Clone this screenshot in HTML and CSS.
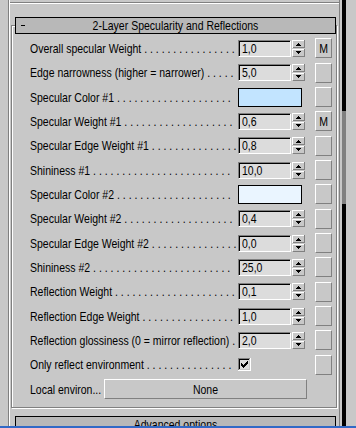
FILE: index.html
```html
<!DOCTYPE html>
<html>
<head>
<meta charset="utf-8">
<link rel="stylesheet" href="styles.css">
</head>
<body>
<div class="screen">
  <div class="main">
    <div class="panel">
      <div class="prevline"></div>
      <div class="rhead"><span class="minus"></span><span class="title t">2-Layer Specularity and Reflections</span><span></span></div>
      <div class="group">
        <div class="row"><div class="label"><span>Overall specular Weight</span><span class="dots"> . . . . . . . . . . . . . . . .</span></div><div class="ctl"><div class="field"><span class="t">1,0</span></div><svg class="spin" width="13" height="17" viewBox="0 0 13 17" shape-rendering="crispEdges"><rect width="13" height="17" fill="#c8c8c8"/><path d="M0.5 7.5V0.5H12" stroke="#fff" fill="none"/><path d="M0.5 7.5H12.5V0" stroke="#808080" fill="none"/><path d="M0.5 16V9.5H12" stroke="#fff" fill="none"/><path d="M0.5 16.5H12.5V9" stroke="#808080" fill="none"/><path d="M6 3h1v1h-1zM5 4h3v1h-3zM4 5h5v1h-5zM4 11h5v1h-5zM5 12h3v1h-3zM6 13h1v1h-1z" fill="#000"/></svg></div><div class="btn"><span class="t">M</span></div></div>
        <div class="row"><div class="label"><span>Edge narrowness (higher = narrower)</span><span class="dots"> . . . . .</span></div><div class="ctl"><div class="field"><span class="t">5,0</span></div><svg class="spin" width="13" height="17" viewBox="0 0 13 17" shape-rendering="crispEdges"><rect width="13" height="17" fill="#c8c8c8"/><path d="M0.5 7.5V0.5H12" stroke="#fff" fill="none"/><path d="M0.5 7.5H12.5V0" stroke="#808080" fill="none"/><path d="M0.5 16V9.5H12" stroke="#fff" fill="none"/><path d="M0.5 16.5H12.5V9" stroke="#808080" fill="none"/><path d="M6 3h1v1h-1zM5 4h3v1h-3zM4 5h5v1h-5zM4 11h5v1h-5zM5 12h3v1h-3zM6 13h1v1h-1z" fill="#000"/></svg></div><div class="btn"></div></div>
        <div class="row"><div class="label"><span>Specular Color #1</span><span class="dots"> . . . . . . . . . . . . . . . . . . . .</span></div><div class="ctl"><div class="swatch sw1"></div></div><div class="btn"></div></div>
        <div class="row"><div class="label"><span>Specular Weight #1</span><span class="dots"> . . . . . . . . . . . . . . . . . . .</span></div><div class="ctl"><div class="field"><span class="t">0,6</span></div><svg class="spin" width="13" height="17" viewBox="0 0 13 17" shape-rendering="crispEdges"><rect width="13" height="17" fill="#c8c8c8"/><path d="M0.5 7.5V0.5H12" stroke="#fff" fill="none"/><path d="M0.5 7.5H12.5V0" stroke="#808080" fill="none"/><path d="M0.5 16V9.5H12" stroke="#fff" fill="none"/><path d="M0.5 16.5H12.5V9" stroke="#808080" fill="none"/><path d="M6 3h1v1h-1zM5 4h3v1h-3zM4 5h5v1h-5zM4 11h5v1h-5zM5 12h3v1h-3zM6 13h1v1h-1z" fill="#000"/></svg></div><div class="btn"><span class="t">M</span></div></div>
        <div class="row"><div class="label"><span>Specular Edge Weight #1</span><span class="dots"> . . . . . . . . . . . . . . .</span></div><div class="ctl"><div class="field"><span class="t">0,8</span></div><svg class="spin" width="13" height="17" viewBox="0 0 13 17" shape-rendering="crispEdges"><rect width="13" height="17" fill="#c8c8c8"/><path d="M0.5 7.5V0.5H12" stroke="#fff" fill="none"/><path d="M0.5 7.5H12.5V0" stroke="#808080" fill="none"/><path d="M0.5 16V9.5H12" stroke="#fff" fill="none"/><path d="M0.5 16.5H12.5V9" stroke="#808080" fill="none"/><path d="M6 3h1v1h-1zM5 4h3v1h-3zM4 5h5v1h-5zM4 11h5v1h-5zM5 12h3v1h-3zM6 13h1v1h-1z" fill="#000"/></svg></div><div class="btn"></div></div>
        <div class="row"><div class="label"><span>Shininess #1</span><span class="dots"> . . . . . . . . . . . . . . . . . . . . . . . .</span></div><div class="ctl"><div class="field"><span class="t">10,0</span></div><svg class="spin" width="13" height="17" viewBox="0 0 13 17" shape-rendering="crispEdges"><rect width="13" height="17" fill="#c8c8c8"/><path d="M0.5 7.5V0.5H12" stroke="#fff" fill="none"/><path d="M0.5 7.5H12.5V0" stroke="#808080" fill="none"/><path d="M0.5 16V9.5H12" stroke="#fff" fill="none"/><path d="M0.5 16.5H12.5V9" stroke="#808080" fill="none"/><path d="M6 3h1v1h-1zM5 4h3v1h-3zM4 5h5v1h-5zM4 11h5v1h-5zM5 12h3v1h-3zM6 13h1v1h-1z" fill="#000"/></svg></div><div class="btn"></div></div>
        <div class="row"><div class="label"><span>Specular Color #2</span><span class="dots"> . . . . . . . . . . . . . . . . . . . .</span></div><div class="ctl"><div class="swatch sw2"></div></div><div class="btn"></div></div>
        <div class="row"><div class="label"><span>Specular Weight #2</span><span class="dots"> . . . . . . . . . . . . . . . . . . .</span></div><div class="ctl"><div class="field"><span class="t">0,4</span></div><svg class="spin" width="13" height="17" viewBox="0 0 13 17" shape-rendering="crispEdges"><rect width="13" height="17" fill="#c8c8c8"/><path d="M0.5 7.5V0.5H12" stroke="#fff" fill="none"/><path d="M0.5 7.5H12.5V0" stroke="#808080" fill="none"/><path d="M0.5 16V9.5H12" stroke="#fff" fill="none"/><path d="M0.5 16.5H12.5V9" stroke="#808080" fill="none"/><path d="M6 3h1v1h-1zM5 4h3v1h-3zM4 5h5v1h-5zM4 11h5v1h-5zM5 12h3v1h-3zM6 13h1v1h-1z" fill="#000"/></svg></div><div class="btn"></div></div>
        <div class="row"><div class="label"><span>Specular Edge Weight #2</span><span class="dots"> . . . . . . . . . . . . . . .</span></div><div class="ctl"><div class="field"><span class="t">0,0</span></div><svg class="spin" width="13" height="17" viewBox="0 0 13 17" shape-rendering="crispEdges"><rect width="13" height="17" fill="#c8c8c8"/><path d="M0.5 7.5V0.5H12" stroke="#fff" fill="none"/><path d="M0.5 7.5H12.5V0" stroke="#808080" fill="none"/><path d="M0.5 16V9.5H12" stroke="#fff" fill="none"/><path d="M0.5 16.5H12.5V9" stroke="#808080" fill="none"/><path d="M6 3h1v1h-1zM5 4h3v1h-3zM4 5h5v1h-5zM4 11h5v1h-5zM5 12h3v1h-3zM6 13h1v1h-1z" fill="#000"/></svg></div><div class="btn"></div></div>
        <div class="row"><div class="label"><span>Shininess #2</span><span class="dots"> . . . . . . . . . . . . . . . . . . . . . . . .</span></div><div class="ctl"><div class="field"><span class="t">25,0</span></div><svg class="spin" width="13" height="17" viewBox="0 0 13 17" shape-rendering="crispEdges"><rect width="13" height="17" fill="#c8c8c8"/><path d="M0.5 7.5V0.5H12" stroke="#fff" fill="none"/><path d="M0.5 7.5H12.5V0" stroke="#808080" fill="none"/><path d="M0.5 16V9.5H12" stroke="#fff" fill="none"/><path d="M0.5 16.5H12.5V9" stroke="#808080" fill="none"/><path d="M6 3h1v1h-1zM5 4h3v1h-3zM4 5h5v1h-5zM4 11h5v1h-5zM5 12h3v1h-3zM6 13h1v1h-1z" fill="#000"/></svg></div><div class="btn"></div></div>
        <div class="row"><div class="label"><span>Reflection Weight</span><span class="dots"> . . . . . . . . . . . . . . . . . . . . .</span></div><div class="ctl"><div class="field"><span class="t">0,1</span></div><svg class="spin" width="13" height="17" viewBox="0 0 13 17" shape-rendering="crispEdges"><rect width="13" height="17" fill="#c8c8c8"/><path d="M0.5 7.5V0.5H12" stroke="#fff" fill="none"/><path d="M0.5 7.5H12.5V0" stroke="#808080" fill="none"/><path d="M0.5 16V9.5H12" stroke="#fff" fill="none"/><path d="M0.5 16.5H12.5V9" stroke="#808080" fill="none"/><path d="M6 3h1v1h-1zM5 4h3v1h-3zM4 5h5v1h-5zM4 11h5v1h-5zM5 12h3v1h-3zM6 13h1v1h-1z" fill="#000"/></svg></div><div class="btn"></div></div>
        <div class="row"><div class="label"><span>Reflection Edge Weight</span><span class="dots"> . . . . . . . . . . . . . . . .</span></div><div class="ctl"><div class="field"><span class="t">1,0</span></div><svg class="spin" width="13" height="17" viewBox="0 0 13 17" shape-rendering="crispEdges"><rect width="13" height="17" fill="#c8c8c8"/><path d="M0.5 7.5V0.5H12" stroke="#fff" fill="none"/><path d="M0.5 7.5H12.5V0" stroke="#808080" fill="none"/><path d="M0.5 16V9.5H12" stroke="#fff" fill="none"/><path d="M0.5 16.5H12.5V9" stroke="#808080" fill="none"/><path d="M6 3h1v1h-1zM5 4h3v1h-3zM4 5h5v1h-5zM4 11h5v1h-5zM5 12h3v1h-3zM6 13h1v1h-1z" fill="#000"/></svg></div><div class="btn"></div></div>
        <div class="row"><div class="label"><span>Reflection glossiness (0 = mirror reflection)</span><span class="dots"> .</span></div><div class="ctl"><div class="field"><span class="t">2,0</span></div><svg class="spin" width="13" height="17" viewBox="0 0 13 17" shape-rendering="crispEdges"><rect width="13" height="17" fill="#c8c8c8"/><path d="M0.5 7.5V0.5H12" stroke="#fff" fill="none"/><path d="M0.5 7.5H12.5V0" stroke="#808080" fill="none"/><path d="M0.5 16V9.5H12" stroke="#fff" fill="none"/><path d="M0.5 16.5H12.5V9" stroke="#808080" fill="none"/><path d="M6 3h1v1h-1zM5 4h3v1h-3zM4 5h5v1h-5zM4 11h5v1h-5zM5 12h3v1h-3zM6 13h1v1h-1z" fill="#000"/></svg></div><div class="btn"></div></div>
        <div class="row"><div class="label"><span>Only reflect environment</span><span class="dots"> . . . . . . . . . . . . . . .</span></div><div class="ctl"><svg class="check" width="13" height="13" viewBox="0 0 13 13" shape-rendering="crispEdges"><rect width="13" height="13" fill="#dcdcdc"/><path d="M0.5 12V0.5H12" stroke="#808080" fill="none"/><path d="M1.5 11V1.5H11" stroke="#000" fill="none"/><path d="M0 12.5H12.5V0" stroke="#fff" fill="none"/><path d="M1 11.5H11.5V1" stroke="#c8c8c8" fill="none"/><path d="M9 3h1v1h-1zM8 4h2v1h-2zM3 5h1v1h-1zM7 5h3v1h-3zM3 6h2v1h-2zM6 6h3v1h-3zM3 7h5v1h-5zM4 8h3v1h-3zM5 9h1v1h-1z" fill="#000"/></svg></div><div class="btn"></div></div>
        <div class="row"><div class="label short"><span>Local environ...</span></div><div class="none"><span class="t">None</span></div></div>
      </div>
      <div class="rhead adv"><span></span><span class="title t">Advanced options</span><span></span></div>
    </div>
    <div class="sbar"><div class="track"><div class="thumb"></div></div></div>
  </div>
  <div class="blue"></div>
</div>
</body>
</html>
```

FILE: styles.css
```css
body {
  margin: 0;
  background: #c8c8c8;
  font-family: "Liberation Sans", Arial, sans-serif;
  font-size: 10.5px;
  color: #000;
}

.screen {
  width: 356px;
  height: 428px;
  display: flex;
  flex-direction: column;
  overflow: hidden;
}

.main {
  height: 426px;
  flex: none;
  display: flex;
  overflow: hidden;
}

.t {
  display: inline-block;
  transform: scaleY(1.3);
}

.panel {
  margin-left: 8px;
  width: 332px;
  flex: none;
  box-sizing: border-box;
  border-left: 1px solid #808080;
  border-right: 1px solid #808080;
  box-shadow: inset 1px 0 0 #fff;
  padding-top: 2px;
}

.prevline {
  height: 2px;
  margin-left: 1px;
  box-sizing: border-box;
  border-top: 1px solid #808080;
  border-bottom: 1px solid #fff;
}

.rhead {
  margin: 13px 0 0 6px;
  width: 321px;
  height: 17px;
  box-sizing: border-box;
  border: 1px solid #000;
  background: #b8b8b8;
  display: grid;
  grid-template-columns: 1fr auto 1fr;
  line-height: 15px;
  position: relative;
  z-index: 1;
  white-space: nowrap;
  overflow: hidden;
}

.minus {
  justify-self: start;
  width: 4px;
  height: 1px;
  background: #000;
  margin: 7px 0 0 5px;
}

.adv {
  margin-top: 8px;
}

.group {
  margin: -9px 0 0 2px;
  width: 326px;
  height: 383px;
  box-sizing: border-box;
  border: 1px solid #808080;
  box-shadow: 1px 1px 0 #fff, inset 1px 1px 0 #fff;
  padding: 10.333px 0 0 18px;
}

.row {
  height: 24.333px;
  display: flex;
  align-items: center;
}

.label {
  width: 208px;
  flex: none;
  display: flex;
  overflow: hidden;
  white-space: nowrap;
  line-height: 15px;
  transform: scaleY(1.3);
}

.label.short {
  width: 74px;
  overflow: visible;
}

.dots {
  white-space: pre;
}

.ctl {
  width: 67px;
  flex: none;
  display: flex;
  align-items: center;
}

.field {
  width: 53px;
  height: 17px;
  flex: none;
  box-sizing: border-box;
  border: 1px solid;
  border-color: #808080 #fff #fff #808080;
  box-shadow: inset 1px 1px 0 #000;
  background: #dcdcdc;
  padding-left: 3px;
  line-height: 15px;
}

.spin {
  display: block;
  margin-left: 1px;
  flex: none;
}

.check {
  display: block;
  flex: none;
}

.btn {
  width: 17px;
  height: 20px;
  flex: none;
  margin-left: 10px;
  box-sizing: border-box;
  border: 1px solid;
  border-color: #fff #808080 #808080 #fff;
  text-align: center;
  line-height: 18px;
}

.swatch {
  width: 64px;
  height: 19px;
  box-sizing: border-box;
  border: 1px solid #000;
}

.sw1 { background: #c2e4ff; }
.sw2 { background: #eaf5ff; }

.none {
  width: 203px;
  height: 20px;
  flex: none;
  box-sizing: border-box;
  border: 1px solid;
  border-color: #fff #808080 #808080 #fff;
  text-align: center;
  line-height: 18px;
}

.sbar {
  width: 16px;
  flex: none;
  padding-left: 2px;
  box-sizing: border-box;
}

.track {
  width: 4px;
  height: 426px;
  background: #000;
  overflow: hidden;
}

.thumb {
  margin-top: 111px;
  height: 93px;
  background: #808080;
}

.blue {
  height: 2px;
  flex: none;
  background: #3169c6;
}
```
